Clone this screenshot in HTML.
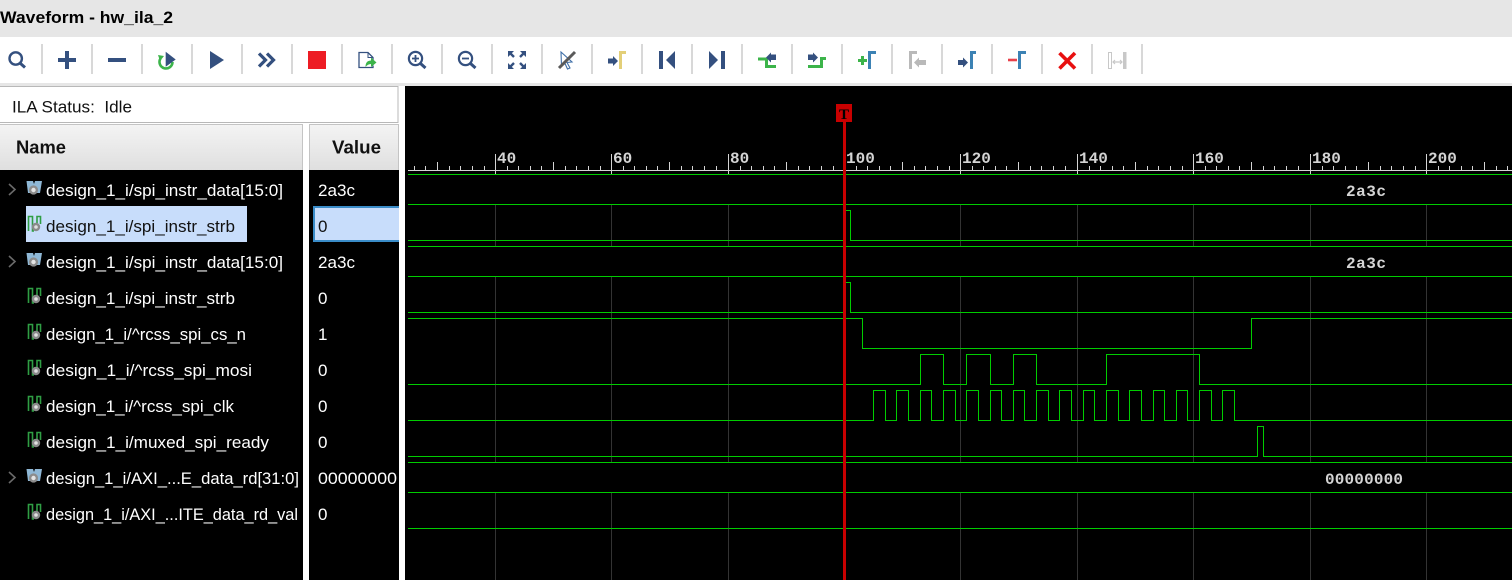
<!DOCTYPE html>
<html><head><meta charset="utf-8"><title>Waveform - hw_ila_2</title>
<style>
html,body{margin:0;padding:0;background:#fff;width:1512px;height:580px;overflow:hidden}
svg{display:block}
.n{font:17px "Liberation Sans",sans-serif;fill:#fff}
.m{font:bold 16px "Liberation Mono",monospace;fill:#d4d4d4}
</style></head><body>
<svg xmlns="http://www.w3.org/2000/svg" width="1512" height="580" viewBox="0 0 1512 580">
<defs>
<linearGradient id="h" x1="0" y1="0" x2="0" y2="1"><stop offset="0" stop-color="#f4f4f4"/><stop offset="1" stop-color="#dfdfdf"/></linearGradient>
<clipPath id="rc"><rect x="408" y="140" width="1104" height="40"/></clipPath>
<g id="sc"><path d="M28.5 14V-0.5H32.5V14H34M37 6V-0.5H40.5V7" fill="none" stroke="#2f9e44" stroke-width="1.6"/><circle cx="36" cy="10" r="3" fill="#e0e0e0" stroke="#8a8a8a" stroke-width="2.4"/></g>
<g id="bus"><path d="M26.5 -8H33L34 -5L35 -8H42L40 4H28Z" fill="#8fb8d6"/><circle cx="33.5" cy="1" r="3.4" fill="#e4e4e4" stroke="#8c8c8c" stroke-width="2.4"/></g>
<g id="ch"><path d="M9 -5L15 0.5L9 6" fill="none" stroke="#6a6a6a" stroke-width="1.6"/></g>
<path id="t" d="M0.5 154V174M12.5 166V170M23.5 166V170M35.5 166V170M46.5 166V170M58.5 162V170M70.5 166V170M81.5 166V170M93.5 166V170M105.5 166V170" stroke="#d4d4d4" stroke-width="1" fill="none"/>
</defs>

<!-- frame -->
<rect width="1512" height="37" fill="#e6e6e6"/>
<rect y="37" width="1512" height="46" fill="#fff"/>
<rect y="83" width="1512" height="3" fill="#e6e6e6"/>
<text x="0" y="23" font-family="Liberation Sans,sans-serif" font-weight="bold" font-size="17" fill="#000" textLength="173" lengthAdjust="spacingAndGlyphs">Waveform - hw_ila_2</text>

<!-- separators -->
<path d="M42 44V74M92 44V74M142 44V74M192 44V74M242 44V74M292 44V74M342 44V74M392 44V74M442 44V74M492 44V74M542 44V74M592 44V74M642 44V74M692 44V74M742 44V74M792 44V74M842 44V74M892 44V74M942 44V74M992 44V74M1042 44V74M1092 44V74M1142 44V74" stroke="#d8d8d8" stroke-width="2"/>

<!-- toolbar icons -->
<g fill="none" stroke="#34507f">
<circle cx="15.7" cy="58.5" r="6.2" stroke-width="2.4"/><path d="M20.5 63.5L25 67.5" stroke-width="3"/>
<path d="M67 51V69M58 60H76" stroke="#34507f" stroke-width="4"/>
<path d="M108 60H126" stroke-width="4"/>
</g>
<path d="M160.5 58.5A6.5 6.5 0 1 0 172.5 62" fill="none" stroke="#3cb44a" stroke-width="2.6"/>
<path d="M158 55L164 56L160 61Z" fill="#3cb44a"/>
<path d="M165.7 51.7L175.7 59.5L165.7 66.7Z" fill="#34507f"/>
<path d="M210 51L224 60L210 69Z" fill="#34507f"/>
<path d="M259 53.5L265.5 60L259 66.5M267 53.5L273.5 60L267 66.5" fill="none" stroke="#34507f" stroke-width="3.2"/>
<rect x="308" y="51" width="18" height="18" fill="#ed1c24"/>
<path d="M373 60V57.5L368 52.5H359V67.5H373V65.5" fill="none" stroke="#34507f" stroke-width="1.3"/>
<path d="M368 52.5V57.5H373" fill="none" stroke="#34507f" stroke-width="1"/>
<path d="M365.5 67C365.5 62 368 60.5 371 60.5V57.5L376.5 62.5L371 67V64C369 64 367 65 365.5 67Z" fill="#3cb44a"/>

<g fill="none" stroke="#34507f">
<circle cx="415.5" cy="58.5" r="6.6" stroke-width="2.2"/><path d="M412 58.5H419M415.5 55V62" stroke-width="1.8"/><path d="M420.5 63.5L425.5 68" stroke-width="3"/>
<circle cx="465.5" cy="58.5" r="6.6" stroke-width="2.2"/><path d="M462 58.5H469" stroke-width="1.8"/><path d="M470.5 63.5L475.5 68" stroke-width="3"/>
<path d="M510 53L514 57M524 53L520 57M510 67L514 63M524 67L520 63" stroke-width="2.4"/>
</g>
<path d="M508 51H514L508 57ZM526 51H520L526 57ZM508 69H514L508 63ZM526 69H520L526 63Z" fill="#34507f"/>
<path d="M561 52L572 62L567 62.5L570 68L567.5 69L565 63.5L561.5 66Z" fill="#fff" stroke="#3f6fa8" stroke-width="1.1"/>
<path d="M559 68L575 52" stroke="#5a5a5a" stroke-width="3"/>
<path d="M608 58.5H613V56L618 61L613 66V63.5H608Z" fill="#34507f"/>
<path d="M620.5 69V52.5H626" fill="none" stroke="#e3cf78" stroke-width="3"/>
<rect x="659" y="51" width="4" height="18" fill="#34507f"/><path d="M675 51V69L666 60Z" fill="#34507f"/>
<path d="M709 51V69L718 60Z" fill="#34507f"/><rect x="721" y="51" width="4" height="18" fill="#34507f"/>
<path d="M758 59H766.5V66.5H776" fill="none" stroke="#3cb44a" stroke-width="3"/>
<path d="M776 54.5V60H771V62.5L766 57.5L771 52.5V54.5Z" fill="#34507f"/>
<path d="M808 54.5H813V52.5L818 57.5L813 62.5V60H808Z" fill="#34507f"/>
<path d="M808 66.5H821.5V58.5H826" fill="none" stroke="#3cb44a" stroke-width="3"/>
<path d="M858 60.5H867M862.5 56V65" stroke="#3cb44a" stroke-width="3"/>
<path d="M869.5 69V52.5H876" fill="none" stroke="#3c82b4" stroke-width="3"/>
<path d="M910.5 69V52.5H917" fill="none" stroke="#b9b9b9" stroke-width="3"/>
<path d="M926 60V65H919V67.5L914 62.5L919 57.5V60Z" fill="#b9b9b9"/>
<path d="M958 60H963V57.5L968 62.5L963 67.5V65H958Z" fill="#34507f"/>
<path d="M971.5 69V52.5H976" fill="none" stroke="#3c82b4" stroke-width="3"/>
<path d="M1008 60H1017" stroke="#e8404a" stroke-width="2.6"/>
<path d="M1019.5 69V52.5H1026" fill="none" stroke="#3c82b4" stroke-width="3"/>
<path d="M1059.5 53L1075 68.5M1075 53L1059.5 68.5" stroke="#e81010" stroke-width="3.6"/>
<rect x="1108.5" y="52.5" width="3" height="16" fill="none" stroke="#c8c8c8"/>
<rect x="1123" y="52" width="3.5" height="17" fill="#c8c8c8"/>
<path d="M1113 62H1122M1115 60L1113 62L1115 64M1120 60L1122 62L1120 64" fill="none" stroke="#c8c8c8" stroke-width="1.2"/>

<!-- status -->
<rect x="-1" y="86.5" width="399" height="36" fill="#fff" stroke="#b8b8b8"/>
<text x="12" y="112.5" font-family="Liberation Sans,sans-serif" font-size="17" fill="#111" textLength="120" lengthAdjust="spacingAndGlyphs">ILA Status:&#160; Idle</text>

<!-- column headers -->
<rect x="-1" y="124.5" width="303.5" height="46" fill="url(#h)" stroke="#c4c4c4"/>
<rect x="309.5" y="124.5" width="89" height="46" fill="url(#h)" stroke="#c4c4c4"/>
<text x="16" y="153.5" font-family="Liberation Sans,sans-serif" font-weight="bold" font-size="18" fill="#111" textLength="50" lengthAdjust="spacingAndGlyphs">Name</text>
<text x="332" y="153.5" font-family="Liberation Sans,sans-serif" font-weight="bold" font-size="18" fill="#111" textLength="49" lengthAdjust="spacingAndGlyphs">Value</text>

<!-- black panes -->
<rect y="170" width="303" height="410" fill="#000"/>
<rect x="309" y="170" width="90" height="410" fill="#000"/>
<rect x="405" y="86" width="1107" height="494" fill="#000"/>

<!-- selection -->
<rect x="26" y="206" width="221" height="36" fill="#c8ddfb"/>
<rect x="313" y="206" width="86" height="36" fill="#c8ddfb"/>
<path d="M399 207H314V241H399" fill="none" stroke="#3a8cc8" stroke-width="2"/>

<!-- name icons -->
<use href="#ch" x="0" y="189"/><use href="#bus" x="0" y="189"/>
<use href="#sc" x="0" y="217"/>
<use href="#ch" x="0" y="261"/><use href="#bus" x="0" y="261"/>
<use href="#sc" x="0" y="289"/>
<use href="#sc" x="0" y="325"/>
<use href="#sc" x="0" y="361"/>
<use href="#sc" x="0" y="397"/>
<use href="#sc" x="0" y="433"/>
<use href="#ch" x="0" y="477"/><use href="#bus" x="0" y="477"/>
<use href="#sc" x="0" y="505"/>

<!-- names -->
<text class="n" x="46" y="196" textLength="237" lengthAdjust="spacingAndGlyphs">design_1_i/spi_instr_data[15:0]</text>
<text class="n" x="46" y="232" textLength="189" lengthAdjust="spacingAndGlyphs" style="fill:#111">design_1_i/spi_instr_strb</text>
<text class="n" x="46" y="268" textLength="237" lengthAdjust="spacingAndGlyphs">design_1_i/spi_instr_data[15:0]</text>
<text class="n" x="46" y="304" textLength="189" lengthAdjust="spacingAndGlyphs">design_1_i/spi_instr_strb</text>
<text class="n" x="46" y="340" textLength="200" lengthAdjust="spacingAndGlyphs">design_1_i/^rcss_spi_cs_n</text>
<text class="n" x="46" y="376" textLength="206" lengthAdjust="spacingAndGlyphs">design_1_i/^rcss_spi_mosi</text>
<text class="n" x="46" y="412" textLength="188" lengthAdjust="spacingAndGlyphs">design_1_i/^rcss_spi_clk</text>
<text class="n" x="46" y="448" textLength="223" lengthAdjust="spacingAndGlyphs">design_1_i/muxed_spi_ready</text>
<text class="n" x="46" y="484" textLength="253" lengthAdjust="spacingAndGlyphs">design_1_i/AXI_...E_data_rd[31:0]</text>
<text class="n" x="46" y="520" textLength="252" lengthAdjust="spacingAndGlyphs">design_1_i/AXI_...ITE_data_rd_val</text>

<!-- values -->
<text class="n" x="318" y="196" textLength="37" lengthAdjust="spacingAndGlyphs">2a3c</text>
<text class="n" x="318" y="232" style="fill:#111">0</text>
<text class="n" x="318" y="268" textLength="37" lengthAdjust="spacingAndGlyphs">2a3c</text>
<text class="n" x="318" y="304">0</text>
<text class="n" x="318" y="340">1</text>
<text class="n" x="318" y="376">0</text>
<text class="n" x="318" y="412">0</text>
<text class="n" x="318" y="448">0</text>
<text class="n" x="318" y="484" textLength="79" lengthAdjust="spacingAndGlyphs">00000000</text>
<text class="n" x="318" y="520">0</text>

<!-- grid -->
<path shape-rendering="crispEdges" stroke="#333" stroke-width="1" fill="none" d="M495.5 204V246M495.5 276V462M495.5 492V580M611.5 204V246M611.5 276V462M611.5 492V580M728.5 204V246M728.5 276V462M728.5 492V580M960.5 204V246M960.5 276V462M960.5 492V580M1077.5 204V246M1077.5 276V462M1077.5 492V580M1193.5 204V246M1193.5 276V462M1193.5 492V580M1310.5 204V246M1310.5 276V462M1310.5 492V580M1426.5 204V246M1426.5 276V462M1426.5 492V580"/>

<!-- waves -->
<g shape-rendering="crispEdges" fill="none" stroke="#00cc00" stroke-width="1">
<path d="M408 174.5H1512M408 204.5H1512"/>
<path d="M408 240.5H844V210.5H850.5V240.5H1512"/>
<path d="M408 246.5H1512M408 276.5H1512"/>
<path d="M408 312.5H844V282.5H850.5V312.5H1512"/>
<path d="M408 318.5H862.5V348.5H1251.5V318.5H1512"/>
<path d="M408 384.5H920.5V354.5H943.5V384.5H966.5V354.5H990.5V384.5H1013.5V354.5H1036.5V384.5H1106.5V354.5H1199.5V384.5H1512"/>
<path d="M408 420.5H873.5V390.5H885.5V420.5H896.5V390.5H908.5V420.5H920.5V390.5H931.5V420.5H943.5V390.5H955.5V420.5H966.5V390.5H978.5V420.5H990.5V390.5H1001.5V420.5H1013.5V390.5H1024.5V420.5H1036.5V390.5H1048.5V420.5H1059.5V390.5H1071.5V420.5H1083.5V390.5H1094.5V420.5H1106.5V390.5H1118.5V420.5H1129.5V390.5H1141.5V420.5H1153.5V390.5H1164.5V420.5H1176.5V390.5H1187.5V420.5H1199.5V390.5H1211.5V420.5H1222.5V390.5H1234.5V420.5H1512"/>
<path d="M408 456.5H1257.5V426.5H1263.5V456.5H1512"/>
<path d="M408 462.5H1512M408 492.5H1512"/>
<path d="M408 528.5H1512"/>
</g>

<!-- ruler -->
<g clip-path="url(#rc)" shape-rendering="crispEdges">
<path d="M408 170.5H1512" stroke="#d4d4d4" stroke-width="1"/>
<use href="#t" x="379"/><use href="#t" x="495"/><use href="#t" x="611"/><use href="#t" x="728"/><use href="#t" x="844"/><use href="#t" x="960"/><use href="#t" x="1077"/><use href="#t" x="1193"/><use href="#t" x="1310"/><use href="#t" x="1426"/>
<path d="M408 174.5H1512" stroke="#00cc00" stroke-width="1"/>
</g>
<text class="m" x="497" y="163">40</text>
<text class="m" x="613" y="163">60</text>
<text class="m" x="730" y="163">80</text>
<text class="m" x="846" y="163">100</text>
<text class="m" x="962" y="163">120</text>
<text class="m" x="1079" y="163">140</text>
<text class="m" x="1195" y="163">160</text>
<text class="m" x="1312" y="163">180</text>
<text class="m" x="1428" y="163">200</text>

<!-- bus labels -->
<text class="m" x="1346" y="196" textLength="40">2a3c</text>
<text class="m" x="1346" y="268" textLength="40">2a3c</text>
<text class="m" x="1325" y="484" textLength="78">00000000</text>

<!-- marker -->
<rect x="843" y="120" width="3" height="460" fill="#c80000"/>
<rect x="836" y="104" width="16" height="18" fill="#c80000"/>
<text x="844" y="119" text-anchor="middle" font-family="Liberation Serif,serif" font-weight="bold" font-size="15" fill="#000">T</text>
</svg>
</body></html>
